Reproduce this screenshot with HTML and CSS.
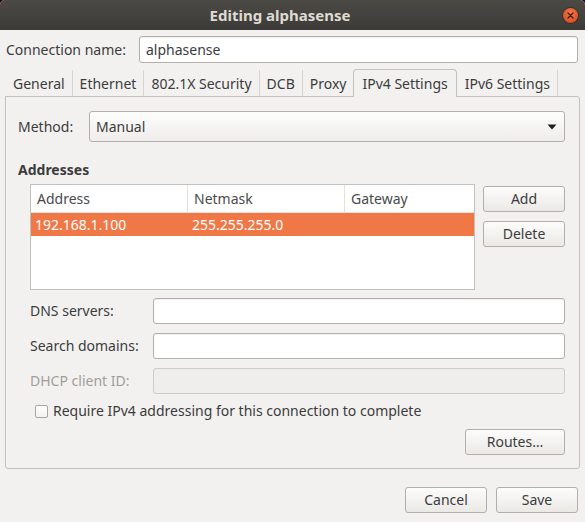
FILE: index.html
```html
<!DOCTYPE html>
<html>
<head>
<meta charset="utf-8">
<link rel="stylesheet" href="styles.css">
</head>
<body>
<div class="window">
  <div class="titlebar">
    <div class="title">Editing alphasense</div>
    <div class="close">
      <svg width="15" height="15" viewBox="0 0 15 15"><path d="M5 5 L10 10 M10 5 L5 10" stroke="#3b1a0c" stroke-width="1.3" stroke-linecap="round"/></svg>
    </div>
  </div>
  <div class="content">
    <div class="conn-row">
      <span class="label">Connection name:</span>
      <div class="entry">alphasense</div>
    </div>
    <div class="tabs">
      <div class="tab">General</div>
      <div class="tab">Ethernet</div>
      <div class="tab">802.1X Security</div>
      <div class="tab">DCB</div>
      <div class="tab before-active">Proxy</div>
      <div class="tab active">IPv4 Settings</div>
      <div class="tab">IPv6 Settings</div>
    </div>
    <div class="notebook">
      <div class="method-row">
        <span class="label method-label">Method:</span>
        <div class="combo">
          <span>Manual</span>
          <svg class="arrow" width="10" height="6" viewBox="0 0 10 6"><path d="M0.5 0.5 H9.5 L5 5.5 Z" fill="#1e1e1e"/></svg>
        </div>
      </div>
      <div class="section-title">Addresses</div>
      <div class="addr-row">
        <div class="tree">
          <div class="tree-head">
            <div class="th">Address</div>
            <div class="th">Netmask</div>
            <div class="th last">Gateway</div>
          </div>
          <div class="tree-row selected">
            <div class="td">192.168.1.100</div>
            <div class="td">255.255.255.0</div>
            <div class="td"></div>
          </div>
        </div>
        <div class="side-buttons">
          <div class="button">Add</div>
          <div class="button">Delete</div>
        </div>
      </div>
      <div class="form-grid">
        <span class="label">DNS servers:</span>
        <div class="entry"></div>
        <span class="label">Search domains:</span>
        <div class="entry"></div>
        <span class="label disabled">DHCP client ID:</span>
        <div class="entry disabled"></div>
      </div>
      <div class="check-row">
        <span class="checkbox"></span>
        <span class="label">Require IPv4 addressing for this connection to complete</span>
      </div>
      <div class="routes-row">
        <div class="button routes">Routes…</div>
      </div>
    </div>
    <div class="actions">
      <div class="button action">Cancel</div>
      <div class="button action">Save</div>
    </div>
  </div>
</div>
</body>
</html>
```

FILE: styles.css
```css
html, body {
  margin: 0;
  padding: 0;
  background: #2c001e;
}
body {
  font-family: "Noto Sans", "DejaVu Sans", sans-serif;
  font-size: 14px;
  color: #3c3c3c;
}
.window {
  width: 585px;
  height: 522px;
  background: #f2f1f0;
  border-radius: 5px 5px 0 0;
  overflow: hidden;
  display: flex;
  flex-direction: column;
}
.titlebar {
  height: 30px;
  flex: none;
  display: flex;
  align-items: center;
  background: linear-gradient(#4b4a45, #3c3b37);
}
.title {
  flex: 1;
  text-align: center;
  font-weight: bold;
  font-size: 15px;
  color: #dfdbd2;
  line-height: 30px;
}
.close {
  width: 15px;
  height: 15px;
  margin: 1px 7px 0 3px;
  border-radius: 50%;
  background: radial-gradient(circle at 50% 35%, #f47b4a, #e0582a 60%, #c8451c);
  box-shadow: 0 0 0 1px rgba(0,0,0,0.25);
  display: flex;
}
.content {
  flex: 1;
  display: flex;
  flex-direction: column;
}
.label {
  line-height: 20px;
  white-space: nowrap;
}
.conn-row {
  display: flex;
  align-items: center;
  margin: 6px 7px 0 6px;
}
.conn-row .label {
  width: 133px;
  flex: none;
}
.entry {
  flex: 1;
  height: 25px;
  box-sizing: content-box;
  border: 1px solid #b3aea7;
  border-radius: 3px;
  background: #ffffff;
  box-shadow: inset 0 1px 1px rgba(0,0,0,0.06);
  padding: 0 6px;
  line-height: 25px;
}
.entry.disabled {
  background: #efeeec;
  border-color: #cfccc7;
  box-shadow: none;
}
.label.disabled {
  color: #a19e99;
}
.tabs {
  display: flex;
  align-items: flex-end;
  margin: 6px 0 0 6px;
  height: 28px;
  position: relative;
  z-index: 1;
}
.tab {
  height: 26px;
  line-height: 27px;
  padding: 0 7px;
  border-right: 1px solid #d8d5d0;
  margin-bottom: 1px;
  white-space: nowrap;
}
.tab.before-active {
  border-right: none;
}
.tab.active {
  height: 27px;
  line-height: 28px;
  margin-bottom: 0;
  border: 1px solid #c4c0ba;
  border-bottom: none;
  border-radius: 4px 4px 0 0;
  background: #f2f1f0;
  padding: 0 8px;
  margin-right: 1px;
}
.notebook {
  margin: -1px 5px 0 5px;
  border: 1px solid #c4c0ba;
  border-radius: 0 3px 3px 3px;
  padding: 14px 14px 13px 12px;
  display: flex;
  flex-direction: column;
}
.method-row {
  display: flex;
  align-items: center;
}
.method-label {
  width: 71px;
  flex: none;
}
.combo {
  flex: 1;
  height: 29px;
  border: 1px solid #b3aea7;
  border-radius: 3px;
  background: linear-gradient(#fdfdfc, #eeedeb);
  display: flex;
  align-items: center;
  justify-content: space-between;
  padding: 0 7px 0 6px;
  line-height: 29px;
}
.arrow {
  display: block;
}
.section-title {
  font-weight: bold;
  line-height: 20px;
  margin-top: 18px;
}
.addr-row {
  display: flex;
  margin: 4px 0 0 12px;
  gap: 8px;
}
.tree {
  flex: 1;
  height: 104px;
  border: 1px solid #c4c0ba;
  background: #ffffff;
}
.tree-head, .tree-row {
  display: grid;
  grid-template-columns: 157px 157px 1fr;
}
.tree-head {
  height: 27px;
  border-bottom: 1px solid #e3e1de;
}
.th {
  line-height: 27px;
  padding-left: 6px;
  border-right: 1px solid #e3e1de;
  color: #4a4a4a;
}
.th.last {
  border-right: none;
}
.tree-row {
  height: 23px;
}
.tree-row.selected {
  background: #f07746;
  color: #ffffff;
}
.td {
  line-height: 23px;
  padding-left: 4px;
}
.side-buttons {
  width: 82px;
  display: flex;
  flex-direction: column;
  gap: 9px;
  margin-top: 2px;
}
.button {
  height: 24px;
  border: 1px solid #b3aea7;
  border-radius: 3px;
  background: linear-gradient(#fcfcfb, #ebe9e6);
  text-align: center;
  line-height: 24px;
  white-space: nowrap;
}
.form-grid {
  display: grid;
  grid-template-columns: 123px 1fr;
  row-gap: 9px;
  margin: 8px 0 0 12px;
  align-items: center;
}
.form-grid .entry {
  height: 24px;
  line-height: 24px;
}
.check-row {
  display: flex;
  align-items: center;
  margin: 7px 0 0 17px;
  gap: 5px;
  height: 20px;
}
.checkbox {
  width: 11px;
  height: 11px;
  border: 1px solid #a9a59f;
  border-radius: 2px;
  background: linear-gradient(#ffffff, #f3f2f1);
  flex: none;
}
.routes-row {
  display: flex;
  justify-content: flex-end;
  margin-top: 8px;
}
.routes {
  width: 98px;
}
.actions {
  display: flex;
  justify-content: flex-end;
  gap: 9px;
  margin: 18px 7px 0 0;
}
.action {
  width: 80px;
}
```
